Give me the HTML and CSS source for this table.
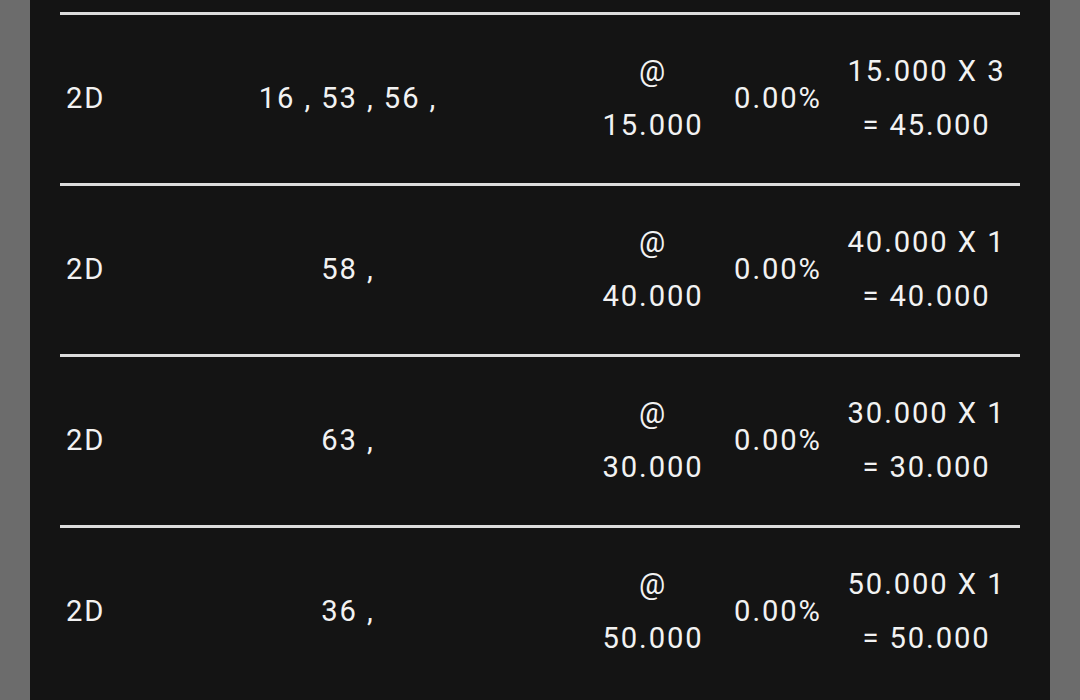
FILE: index.html
```html
<!DOCTYPE html>
<html>
<head>
<meta charset="utf-8">
<link rel="stylesheet" href="styles.css">
</head>
<body>
<div class="panel">
  <div class="row">
    <div class="cell game">2D</div>
    <div class="cell nums">16 , 53 , 56 ,</div>
    <div class="cell price"><span>@</span><span>15.000</span></div>
    <div class="cell disc">0.00%</div>
    <div class="cell total"><span>15.000 X 3</span><span>= 45.000</span></div>
  </div>
  <div class="row">
    <div class="cell game">2D</div>
    <div class="cell nums">58 ,</div>
    <div class="cell price"><span>@</span><span>40.000</span></div>
    <div class="cell disc">0.00%</div>
    <div class="cell total"><span>40.000 X 1</span><span>= 40.000</span></div>
  </div>
  <div class="row">
    <div class="cell game">2D</div>
    <div class="cell nums">63 ,</div>
    <div class="cell price"><span>@</span><span>30.000</span></div>
    <div class="cell disc">0.00%</div>
    <div class="cell total"><span>30.000 X 1</span><span>= 30.000</span></div>
  </div>
  <div class="row">
    <div class="cell game">2D</div>
    <div class="cell nums">36 ,</div>
    <div class="cell price"><span>@</span><span>50.000</span></div>
    <div class="cell disc">0.00%</div>
    <div class="cell total"><span>50.000 X 1</span><span>= 50.000</span></div>
  </div>
</div>
</body>
</html>
```

FILE: styles.css
```css
html, body {
  margin: 0;
  padding: 0;
  background: #6c6c6c;
  height: 100%;
  overflow: hidden;
}

.panel {
  margin: 0 30px;
  padding: 12px 30px 0;
  background: #141414;
  min-height: 700px;
  box-sizing: border-box;
  font-family: Roboto, "Noto Sans", sans-serif;
  font-size: 29.2px;
  letter-spacing: 1.9px;
  color: #f2f2f2;
}

.row {
  border-top: 3px solid #dcdcdc;
  height: 168px;
  display: grid;
  grid-template-columns: 176px 224px 263px 110px 187px;
  align-items: center;
}

.cell {
  display: flex;
  flex-direction: column;
  line-height: 54px;
  margin-bottom: 2px;
}

.game {
  padding-left: 6px;
}

.nums {
  align-items: center;
  text-align: center;
}

.price {
  padding-left: 123px;
  align-items: center;
}

.disc {
  align-items: center;
}

.total {
  align-items: center;
}
```
